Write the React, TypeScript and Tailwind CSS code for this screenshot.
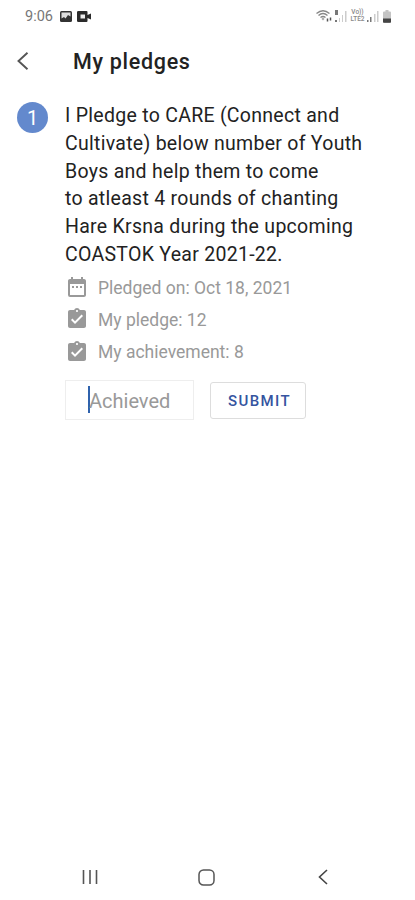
import { MdAssignmentTurnedIn, MdDateRange } from "react-icons/md";

const pledgeLines = [
    "I Pledge to CARE (Connect and",
    "Cultivate) below number of Youth",
    "Boys and help them to come",
    "to atleast 4 rounds of chanting",
    "Hare Krsna during the upcoming",
    "COASTOK Year 2021-22.",
];

const details = [
    { icon: MdDateRange, text: "Pledged on: Oct 18, 2021" },
    { icon: MdAssignmentTurnedIn, text: "My pledge: 12" },
    { icon: MdAssignmentTurnedIn, text: "My achievement: 8" },
];

function StatusBar() {
    return (
        <div className="flex h-8 items-center justify-between pl-[25px] pr-[24px]">
            <div className="flex items-center">
                <span className="w-[29px] pt-[2px] text-[14.5px] text-[#777]">9:06</span>
                <svg className="ml-[6px]" width="12" height="11" viewBox="0 0 12 11">
                    <rect width="12" height="11" rx="1.5" fill="#333" />
                    <path d="M1.5 1.5h9v4L8 4 5.5 7.5 4 6 1.5 7.5z" fill="#ddd" />
                </svg>
                <svg className="ml-[5px]" width="14" height="11" viewBox="0 0 14 11">
                    <path d="M1.5 0h8q1 0 1 1v3L14 2.5v6L10.500 7v3q0 1-1 1h-8q-1.500 0-1.500-1V1q0-1 1.500-1z" fill="#2b2b2b" />
                    <rect x="3.500" y="3.500" width="4.500" height="4" fill="#eee" />
                </svg>
            </div>
            <div className="flex items-center">
                {/* wifi */}
                <svg width="17" height="14" viewBox="0 0 17 14" fill="none" stroke="#888">
                    <path d="M.5 4.500Q7 -1 13.500 4.500M2.500 6.500Q7 2.500 11.500 6.500M4.500 8.500Q7 6.500 9.500 8.500" strokeWidth="1.400" />
                    <path d="M7 8l1.500 2L7 11.500 5.500 10z" fill="#aaa" stroke="none" />
                    <path d="M11.500 12.500v-3M14.500 11.500v-3" stroke="#555" strokeWidth="1.500" />
                </svg>
                <svg className="ml-[2px]" width="12" height="13" viewBox="0 0 12 13">
                    <path d="M0 0h3v5H0zM0 10h2v2H0z" fill="#777" />
                    <path d="M4 8h1v4H4zM7 5h1v7H7zM10 1h1.500v11H10z" fill="#ccc" />
                </svg>
                <span className="ml-[3px] flex w-[15px] flex-col items-center text-[6.5px] leading-[7px] font-medium text-[#888]">
                    <span>Vo))</span>
                    <span>LTE2</span>
                </span>
                <svg className="ml-[2px]" width="12" height="13" viewBox="0 0 12 13">
                    <path d="M0 10h1.500v2H0zM3 7h1.500v5H3z" fill="#777" />
                    <path d="M7 4h1.500v8H7zM10 1h1.500v11H10z" fill="#ccc" />
                </svg>
                <svg className="ml-[4px]" width="8" height="13" viewBox="0 0 8 13">
                    <path d="M2.500 0h3v1.500H7q1 0 1 1V12q0 1-1 1H1q-1 0-1-1V2.500q0-1 1-1h1.500z" fill="#c4c4c4" />
                    <path d="M0 8.500h8V12q0 .7-1 .7H1q-1 0-1-.7z" fill="#444" />
                </svg>
            </div>
        </div>
    );
}

function Header() {
    return (
        <header className="flex h-[58px] items-center pl-[17px]">
            <svg width="12" height="18" viewBox="0 0 12 18" fill="none" stroke="#555" strokeWidth="1.900">
                <path d="M10.500 0.800L1.500 9l9 8.200" />
            </svg>
            <h1 className="ml-[44px] pt-[3px] text-[21.5px] font-medium tracking-[0.7px] text-[#222]">My pledges</h1>
        </header>
    );
}

function NavBar() {
    return (
        <nav className="mt-auto flex h-[46px] items-center">
            <svg className="ml-[82px]" width="16" height="16" viewBox="0 0 16 16" stroke="#555" strokeWidth="1.600">
                <path d="M1.500 1v14M8 1v14M14.500 1v14" />
            </svg>
            <svg className="ml-[100px]" width="17" height="17" viewBox="0 0 17 17" fill="none" stroke="#555" strokeWidth="1.500">
                <rect x="1" y="1" width="15" height="15" rx="4.500" />
            </svg>
            <svg className="ml-[103px]" width="10" height="16" viewBox="0 0 10 16" fill="none" stroke="#444" strokeWidth="1.600">
                <path d="M9 1L1.500 8 9 15" />
            </svg>
        </nav>
    );
}

export default function App() {
    return (
        <div className="flex h-[900px] w-[415px] flex-col bg-white font-['Roboto',sans-serif]">
            <StatusBar />
            <Header />
            <main className="flex pt-[12px] pl-[17px]">
                <span className="flex size-[31px] shrink-0 items-center justify-center rounded-full bg-[#6389cd] text-[20px] text-white">
                    1
                </span>
                <div className="ml-[17px]">
                    <p className="text-[19.5px] leading-[27.8px] tracking-[0.28px] whitespace-nowrap text-[#222]">
                        {pledgeLines.map((line) => (
                            <span key={line} className="block">{line}</span>
                        ))}
                    </p>
                    <ul className="mt-[3px] text-[17.5px] text-[#999]">
                        {details.map(({ icon: Icon, text }) => (
                            <li key={text} className="flex h-[32.3px] items-center whitespace-nowrap">
                                <Icon size={24} className="mr-[9px] mb-[2px] shrink-0" />
                                {text}
                            </li>
                        ))}
                    </ul>
                    <div className="mt-[11px] flex items-center">
                        <div className="flex h-[40px] w-[129px] items-center border border-[#eee] pl-[22px]">
                            <span className="h-[27px] w-[2px] bg-[#2f62ad]" />
                            <span className="-ml-px pt-[3px] text-[20px] text-[#999]">Achieved</span>
                        </div>
                        <button className="mt-px ml-[16px] h-[37px] w-[96px] rounded-[3px] border border-[#ddd] pt-[3px] pl-[3px] text-[15px] font-medium tracking-[1.4px] text-[#3554a0]">
                            SUBMIT
                        </button>
                    </div>
                </div>
            </main>
            <NavBar />
        </div>
    );
}
